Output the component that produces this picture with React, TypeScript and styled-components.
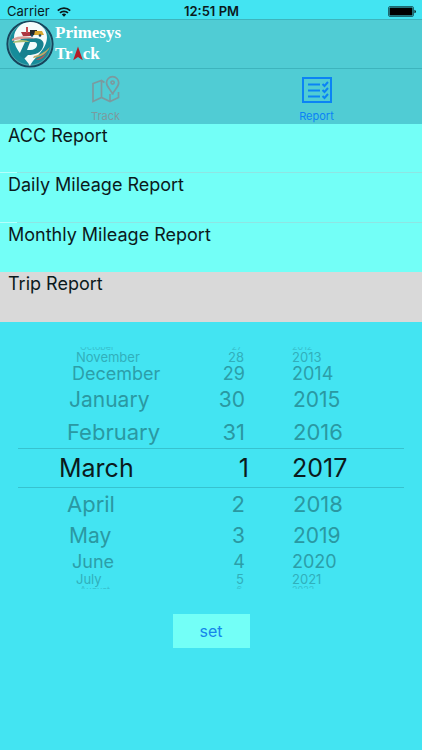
import React, { useState } from "react";
import styled, { createGlobalStyle, css } from "styled-components";

const GlobalStyle = createGlobalStyle`
  * { box-sizing: border-box; }
  body {
    margin: 0;
    background: #43e4f2;
    color: #0b1a1c;
    font-family: Inter, "Liberation Sans", sans-serif;
  }
  button { font-family: inherit; border: 0; padding: 0; margin: 0; cursor: pointer; }
`;

const Screen = styled.div`
  display: flex;
  flex-direction: column;
  min-height: 100vh;
`;

const StatusBar = styled.div`
  display: grid;
  grid-template-columns: 1fr auto 1fr;
  align-items: center;
  height: 19px;
  padding: 4px 6px 0 7px;
  font-size: 13px;
  line-height: 15px;
`;

const Carrier = styled.span`
  display: flex;
  align-items: center;
  gap: 7px;
`;

const Clock = styled.span`
  font-weight: 600;
`;

const BatterySlot = styled.span`
  display: flex;
  justify-content: flex-end;
`;

const NavBar = styled.header`
  display: flex;
  align-items: center;
  gap: 1px;
  height: 50px;
  padding-left: 6px;
  background: #50ccd4;
  border-top: 1px solid #3db4bd;
  border-bottom: 1px solid #3db4bd;
`;

const Brand = styled.div`
  display: flex;
  flex-direction: column;
  padding-bottom: 2px;
  color: #fff;
  font: bold 17px/21px "Liberation Serif", serif;
`;

const BrandLine = styled.span`
  display: flex;
  align-items: center;
`;

const TabBar = styled.nav`
  display: grid;
  grid-template-columns: 1fr 1fr;
  height: 55px;
  background: #50ccd4;
`;

const Tab = styled.button<{ $active?: boolean }>`
  display: flex;
  flex-direction: column;
  align-items: center;
  gap: 4px;
  padding-top: 6px;
  background: transparent;
  color: ${(p) => (p.$active ? "#0b83f5" : "#7b9a9f")};
  font-size: 11px;
  line-height: 14px;
`;

const ReportList = styled.ul`
  margin: 0;
  padding: 0;
  list-style: none;
`;

const ReportItem = styled.li<{ $selected?: boolean }>`
  height: 49px;
  background: ${(p) => (p.$selected ? "#d9d9d9" : "#73fff7")};
  ${(p) =>
    !p.$selected &&
    css`
      background-image: linear-gradient(to right, #b5fffb 17px, #8ee5e3 17px);
      background-size: 100% 1px;
      background-position: bottom;
      background-repeat: no-repeat;
    `}
  &:nth-child(even) { height: 50px; }
  &:nth-last-child(-n + 2) { background-image: none; }
`;

const ReportButton = styled.button`
  display: flex;
  width: 100%;
  height: 100%;
  align-items: flex-start;
  padding-left: 8px;
  background: transparent;
  color: #0b1a1c;
  font-size: 18px;
  line-height: 23px;
`;

const Picker = styled.div`
  position: relative;
  display: grid;
  grid-template-columns: 182fr 49fr 155fr;
  margin: 25px 18px 0;
`;

const SelectionBand = styled.div`
  position: absolute;
  inset: 101px 0 auto;
  height: 40px;
  border-top: 1px solid #37c2cf;
  border-bottom: 1px solid #37c2cf;
  pointer-events: none;
`;

const Wheel = styled.div<{ $align: "start" | "end"; $inset: number }>`
  display: flex;
  flex-direction: column;
  align-items: ${(p) => "flex-" + p.$align};
  padding-left: ${(p) => p.$inset}px;
`;

type Ring = { height: number; size: number; month: number; day: number; year: number; color: string };

const rings: Ring[] = [
  { height: 40, size: 25, month: 0, day: 0, year: 0, color: "#0b1a1c" },
  { height: 32, size: 22, month: 8, day: 4, year: 1, color: "#2a98a2" },
  { height: 32, size: 21, month: 10, day: 4, year: 1, color: "#2a98a2" },
  { height: 20, size: 18, month: 13, day: 4, year: 0, color: "#2c9ea9" },
  { height: 14, size: 13, month: 17, day: 5, year: 0, color: "#31afbb" },
  { height: 3, size: 9, month: 21, day: 7, year: 0, color: "#37c2cf" },
];

type Kind = "month" | "day" | "year";

const WheelItem = styled.button<{ $ring: Ring; $kind: Kind; $above: boolean }>`
  display: flex;
  align-items: ${(p) => (p.$ring.height > 3 ? "center" : p.$above ? "flex-end" : "flex-start")};
  height: ${(p) => p.$ring.height}px;
  overflow: ${(p) => (p.$ring.height > 3 ? "visible" : "hidden")};
  background: transparent;
  color: ${(p) => p.$ring.color};
  font-size: ${(p) => p.$ring.size}px;
  line-height: ${(p) => (p.$ring.height > 3 ? p.$ring.height : 7)}px;
  ${(p) =>
    p.$kind === "day"
      ? css`margin-right: ${p.$ring.day}px;`
      : css`margin-left: ${p.$ring[p.$kind]}px;`}
`;

const Actions = styled.div`
  display: flex;
  justify-content: center;
  margin-top: 25px;
`;

const SetButton = styled.button`
  width: 77px;
  height: 34px;
  background: #73fff7;
  color: #1586ea;
  font-size: 16px;
`;

const months = ["January", "February", "March", "April", "May", "June", "July", "August", "September", "October", "November", "December"];
const days = Array.from({ length: 31 }, (_, i) => String(i + 1));
const years = Array.from({ length: 100 }, (_, i) => String(1970 + i));
const offsets = [-5, -4, -3, -2, -1, 0, 1, 2, 3, 4, 5];
const reports = ["ACC Report", "Daily Mileage Report", "Monthly Mileage Report", "Trip Report"];

function WheelColumn({ label, kind, values, start, align = "start", inset = 0 }: {
  label: string; kind: Kind; values: string[]; start: number; align?: "start" | "end"; inset?: number;
}) {
  const [index, setIndex] = useState(start);
  return (
    <Wheel role="listbox" aria-label={label} $align={align} $inset={inset}>
      {offsets.map((offset) => {
        const i = (index + offset + values.length) % values.length;
        return (
          <WheelItem key={offset} type="button" role="option" aria-selected={offset === 0}
            $ring={rings[Math.abs(offset)]} $kind={kind} $above={offset < 0} onClick={() => setIndex(i)}>
            {values[i]}
          </WheelItem>
        );
      })}
    </Wheel>
  );
}

const WifiIcon = () => (
  <svg width="14" height="10" viewBox="0 0 14 10" fill="none" stroke="#0b1a1c" strokeWidth="1.7" aria-hidden="true">
    <path d="M.8 3.6a9 9 0 0 1 12.4 0M3 5.9a5.8 5.8 0 0 1 8 0" />
    <path d="M7 9.7 4.8 7.6a3.2 3.2 0 0 1 4.4 0Z" fill="#0b1a1c" stroke="none" />
  </svg>
);

const BatteryIcon = () => (
  <svg width="28" height="11" viewBox="0 0 28 11" aria-hidden="true">
    <rect x=".5" y=".5" width="25" height="10" rx="1.5" fill="none" stroke="#1d6971" />
    <rect x="1.5" y="1.5" width="23" height="8" rx=".5" fill="#000" />
    <path d="M26.5 3.7q1.3.4 1.3 1.8t-1.3 1.8Z" fill="#000" />
  </svg>
);

const Logo = () => (
  <svg width="48" height="48" viewBox="0 0 48 48" role="img" aria-label="Primesys Track">
    <circle cx="24" cy="24" r="22.6" fill="#168c9a" stroke="#17455c" strokeWidth="2" />
    <circle cx="24" cy="24" r="21.2" fill="none" stroke="#5fa9ae" strokeWidth=".8" />
    <path d="M24 46C21 39 8 31 8 18a16 15 0 0 1 33-1c0 13-13 20-17 29Z" fill="#f4fbfb" />
    <path d="M15 18h13c8 0 11 4 9 9-2 6-8 8-15 8l-4 4-5-4 6-13h-5Z" fill="#16818f" />
    <path d="M24 22h4c5 0 4 8-4 8h-3Z" fill="#f4fbfb" />
    <path d="M6 19c8-4 17-3 24 0-9-1-17 0-24 2Z" fill="#db9f98" />
    <path d="M7 22c8-3 13-2 17 0-6 0-12 0-17 1Z" fill="#a9bf73" />
    <path d="M28 36c6-1 11-4 16-9-3 6-8 10-17 11Z" fill="#bfa967" />
    <path d="M31 39c4-1 8-4 10-7-2 5-6 8-11 8Z" fill="#c64d4c" />
    <path d="M15 12h11l-1 4h-8Z" fill="#ab3640" />
    <path d="M20 7h2v6h-2Z" fill="#c94b50" />
    <path d="M24 10h7v5h-7Z" fill="#25282b" />
    <path d="M29 11h7l2 4H28Z" fill="#d6a52e" />
    <circle cx="26" cy="15.5" r="1.3" fill="#17455c" />
    <circle cx="34" cy="15.5" r="1.3" fill="#17455c" />
  </svg>
);

const Arrowhead = () => (
  <svg width="10" height="15" viewBox="0 0 10 15" aria-hidden="true">
    <path d="M5 .5 9.8 14.3 5 11 .2 14.3Z" fill="#b51d26" />
  </svg>
);

const MapIcon = () => (
  <svg width="30" height="30" viewBox="0 0 30 30" fill="none" stroke="currentColor" strokeWidth="1.7" aria-hidden="true">
    <path d="M13.5 7.5 10.5 5.5 2 8.5v18l8.5-4 8.5 4 8.5-4V17M10.5 5.5v17M19 19v7.5" />
    <path d="M21.6 19.5C20.5 15 15.5 12.5 15.5 7.8a6.1 6.1 0 0 1 12.2 0c0 4.7-5 7.2-6.1 11.7Z" />
    <circle cx="21.6" cy="7.6" r="1.6" />
  </svg>
);

const ChecklistIcon = () => (
  <svg width="32" height="30" viewBox="0 0 32 30" fill="none" stroke="currentColor" strokeWidth="2" aria-hidden="true">
    <path d="M2 3h28v24H2Z" />
    <path d="M7 9.5h12M7 15.5h12M7 21.5h12" />
    <path d="m21.5 9 2 2 3.5-4M21.5 15l2 2 3.5-4M21.5 21l2 2 3.5-4" />
  </svg>
);

export default function App() {
  const [selected, setSelected] = useState(3);
  return (
    <>
      <GlobalStyle />
      <Screen>
        <StatusBar>
          <Carrier>Carrier <WifiIcon /></Carrier>
          <Clock>12:51 PM</Clock>
          <BatterySlot><BatteryIcon /></BatterySlot>
        </StatusBar>
        <NavBar>
          <Logo />
          <Brand>
            <BrandLine>Primesys</BrandLine>
            <BrandLine>Tr<Arrowhead />ck</BrandLine>
          </Brand>
        </NavBar>
        <TabBar>
          <Tab type="button"><MapIcon />Track</Tab>
          <Tab type="button" $active aria-current="page"><ChecklistIcon />Report</Tab>
        </TabBar>
        <ReportList>
          {reports.map((name, i) => (
            <ReportItem key={name} $selected={i === selected}>
              <ReportButton type="button" onClick={() => setSelected(i)}>{name}</ReportButton>
            </ReportItem>
          ))}
        </ReportList>
        <Picker>
          <SelectionBand />
          <WheelColumn label="Month" kind="month" values={months} start={2} inset={41} />
          <WheelColumn label="Day" kind="day" values={days} start={0} align="end" />
          <WheelColumn label="Year" kind="year" values={years} start={47} inset={43} />
        </Picker>
        <Actions>
          <SetButton type="button">set</SetButton>
        </Actions>
      </Screen>
    </>
  );
}
